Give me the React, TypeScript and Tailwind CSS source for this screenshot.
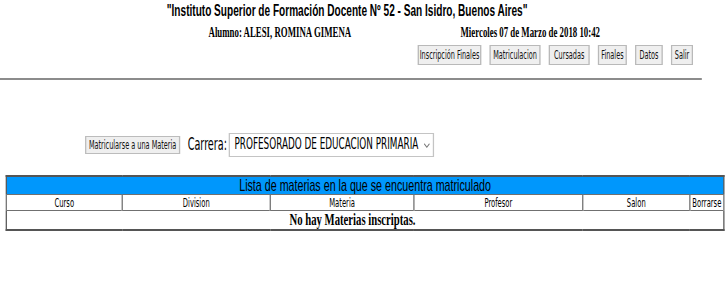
const navButtons = [
  { label: "Inscripción Finales", width: "w-[101px]" },
  { label: "Matriculacion", width: "w-[81px]" },
  { label: "Cursadas", width: "w-[65px]" },
  { label: "Finales", width: "w-[46px]" },
  { label: "Datos", width: "w-[44px]" },
  { label: "Salir", width: "w-[35px]" },
];

const columns = [
  { label: "Curso", width: "w-[184px]" },
  { label: "Division", width: "w-[235px]" },
  { label: "Materia", width: "w-[228px]" },
  { label: "Profesor", width: "w-[268px]" },
  { label: "Salon", width: "w-[170px]" },
  { label: "Borrarse", width: "w-[54px]" },
];

const sans = "font-['Liberation_Sans',Arial,sans-serif]";
const serif = "font-['Liberation_Serif','Times_New_Roman',serif]";
const tahoma = "font-['DejaVu_Sans_Condensed','DejaVu_Sans',Tahoma,sans-serif]";

export default function App() {
  return (
    <div className="h-[281px] w-[728px] overflow-hidden bg-white text-black">
      {/* the whole page is squeezed sideways, as in the capture */}
      <div className="w-[1156px] origin-top-left scale-x-[0.63]">
        <header className="w-[1114px]">
          <h1 className={`w-[1102px] text-center text-[16px] font-bold leading-[22px] ${sans}`}>
            "Instituto Superior de Formación Docente Nº 52 - San Isidro, Buenos Aires"
          </h1>
          <div className={`grid h-[20px] grid-cols-[400px_1fr] items-center pl-[331px] text-[14px] font-bold ${serif}`}>
            <span>Alumno: ALESI, ROMINA GIMENA</span>
            <span>Miercoles 07 de Marzo de 2018 10:42</span>
          </div>
          <nav className="mt-[3px] flex w-[1100px] justify-end gap-[13px]">
            {navButtons.map((b) => (
              <button
                key={b.label}
                type="button"
                className={`h-[20px] ${b.width} whitespace-nowrap border border-x-2 border-[#b9b9b9] bg-[#efefef] text-[11.5px] leading-[18px] text-[#111] ${tahoma}`}
              >
                {b.label}
              </button>
            ))}
          </nav>
          <hr className="mt-[13px] border-t-2 border-[#8c8c8c]" />
        </header>

        <div className="mt-[53px] flex h-[24px] items-center">
          <button
            type="button"
            className={`ml-[135px] h-[18px] w-[151px] whitespace-nowrap border border-x-2 border-[#bcbcbc] bg-[#efefef] text-[11.5px] leading-[16px] text-[#111] ${tahoma}`}
          >
            Matricularse a una Materia
          </button>
          <span className={`ml-[12px] text-[17px] text-black ${tahoma}`}>Carrera:</span>
          <div className="ml-[3px] flex h-[24px] w-[326px] items-center border border-x-2 border-[#c4c4c4] bg-white">
            <span className={`whitespace-nowrap pl-[7px] text-[15.6px] text-black ${tahoma}`}>
              PROFESORADO DE EDUCACION PRIMARIA
            </span>
            <svg viewBox="0 0 12 6" className="ml-auto mr-[4px] h-[5px] w-[11px]" fill="none">
              <path d="M1 1l5 4 5-4" stroke="#777" strokeWidth="1.6" />
            </svg>
          </div>
        </div>

        <table className="ml-[9px] mt-[18px] w-[1139px] table-fixed border-collapse border-2 border-[#555]">
          <colgroup>
            {columns.map((c) => (
              <col key={c.label} className={c.width} />
            ))}
          </colgroup>
          <thead>
            <tr>
              <th
                colSpan={6}
                className={`h-[18px] bg-[#0097fc] p-0 text-[17px] font-normal leading-[17px] text-black ${sans}`}
              >
                Lista de materias en la que se encuentra matriculado
              </th>
            </tr>
            <tr>
              {columns.map((c) => (
                <th
                  key={c.label}
                  className={`h-[16px] border border-x-2 border-[#707070] p-0 text-[12px] font-normal leading-[14px] text-black ${tahoma}`}
                >
                  {c.label}
                </th>
              ))}
            </tr>
          </thead>
          <tbody>
            <tr>
              <td
                colSpan={6}
                className={`h-[19px] border border-[#707070] p-0 pr-[40px] text-center text-[17px] font-bold leading-[17px] ${serif}`}
              >
                No hay Materias inscriptas.
              </td>
            </tr>
          </tbody>
        </table>
      </div>
    </div>
  );
}
